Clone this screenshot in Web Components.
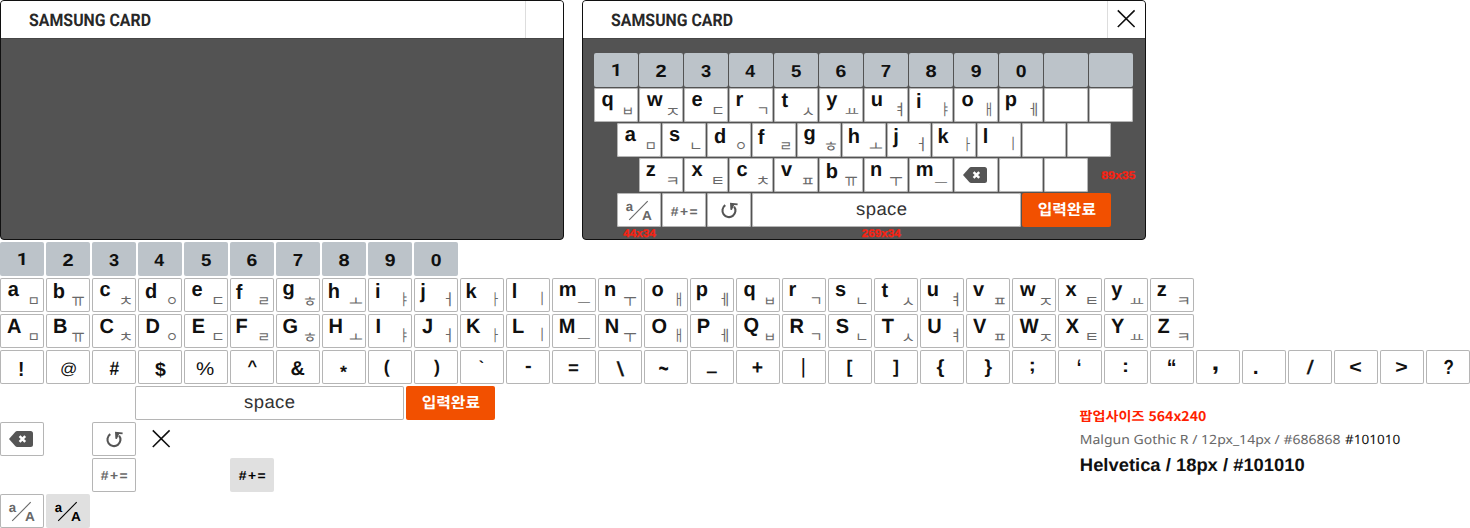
<!DOCTYPE html>
<html lang="ko">
<head>
<meta charset="utf-8">
<title>SAMSUNG CARD keypad</title>
<style>
html,body{margin:0;background:#fff;font-family:"Liberation Sans",Arial,sans-serif;color:#101010}
</style>
</head>
<body>
<keypad-board></keypad-board>
<script>
const FONTS={
  bold:['700','"Liberation Sans", sans-serif'],
  reg:['400','"Liberation Sans", sans-serif'],
  ko:['400','"Noto Sans CJK KR", sans-serif'],
  kob:['700','"Noto Sans CJK KR", sans-serif'],
  ui:['400','"Noto Sans", sans-serif'],
  title:['700','Roboto, sans-serif']
};
const ctx=document.createElement('canvas').getContext('2d');
const esc=s=>String(s).replace(/&/g,'&amp;').replace(/</g,'&lt;').replace(/>/g,'&gt;').replace(/"/g,'&quot;');

/* A line of text whose ink edges are set in px: x="left[,right]" and base="y" or y="top,bottom". */
class InkLabel extends HTMLElement{
  connectedCallback(){
    const root=this.shadowRoot||this.attachShadow({mode:'open'});
    const t=this.getAttribute('text'), size=+this.getAttribute('size'), ls=+(this.getAttribute('spacing')||0);
    const face=this.getAttribute('face')||'bold', [w,fam]=FONTS[face];
    /* strokes of the jamo thinner than this keep their own weight */
    const thin=face==='ko'?2.5:0;
    ctx.letterSpacing='0px';
    ctx.font=`${w} ${size}px ${fam}`;
    const line=ctx.measureText(t);
    const A=Math.round(line.fontBoundingBoxAscent), D=Math.round(line.fontBoundingBoxDescent), L=A+D;
    /* ink is measured at 20 times the size, where it is not rounded to whole pixels */
    ctx.font=`${w} ${size*20}px ${fam}`;
    const m=ctx.measureText(t);
    const left=m.actualBoundingBoxLeft/20, up=m.actualBoundingBoxAscent/20;
    const inkW=m.actualBoundingBoxRight/20+left+ls*([...t].length-1), inkH=up+m.actualBoundingBoxDescent/20;
    const xs=this.getAttribute('x').split(',').map(Number);
    let sx=1,sy=1,tx,ty;
    if(xs.length>1&&inkW>thin) sx=(xs[1]-xs[0])/inkW;
    tx=xs[0]+left*sx;
    if(xs.length>1&&inkW<=thin) tx=(xs[0]+xs[1])/2-(inkW/2-left);
    if(this.hasAttribute('y')){
      const ys=this.getAttribute('y').split(',').map(Number);
      if(inkH>thin) sy=(ys[1]-ys[0])/inkH;
      ty=(ys[0]+ys[1])/2+.35+(+this.getAttribute('drop')||0)-(A-up+inkH/2)*sy;
    }else{
      sy=+(this.getAttribute('stretch')||1);
      ty=+this.getAttribute('base')-A*sy;
    }
    root.innerHTML=`<style>:host{display:block;grid-area:1/1;min-width:0;height:100%}
      span{display:block;width:max-content;white-space:pre;font:${w} ${size}px/${L}px ${fam};letter-spacing:${ls}px;text-rendering:geometricPrecision;
      transform-origin:0 0;transform:translate(${tx}px,${ty}px) scale(${sx},${sy})}</style><span>${esc(t)}</span>`;
  }
}
customElements.define('ink-label',InkLabel);

class KeyIcon extends HTMLElement{
  connectedCallback(){
    const art={
      back:'<path d="M9 17l6.2-7.1Q16 9 17.2 9H30.500q2.500 0 2.500 2.500v11q0 2.500-2.500 2.500H17.200q-1.200 0-2-.9z" fill="#555"/><path d="M19.600 14.200l5.600 5.600m0-5.600l-5.600 5.600" stroke="#fff" stroke-width="2.500"/>',
      redo:'<path d="M18.300 12.200A6.500 6.500 0 1 0 27.100 13.600" fill="none" stroke="#555" stroke-width="2.100"/><path d="M23 9.800l7.700.7-.2 1.700-3.300-.2-2.300 5-1.500-.3z" fill="#555"/>',
      slash:'<path d="M12.200 26.900L30.700 8.200" stroke="currentColor" stroke-width="1.100"/>',
      close:'<path d="M14.800 8.400L31.600 25m0-16.600L14.800 25" stroke="#101010" stroke-width="1.600"/>'
    }[this.getAttribute('name')];
    this.attachShadow({mode:'open'}).innerHTML=`<style>:host{display:block;grid-area:1/1}svg{display:block}</style><svg width="44" height="34" viewBox="0 0 44 34">${art}</svg>`;
  }
}
customElements.define('key-icon',KeyIcon);

class KeyCap extends HTMLElement{
  connectedCallback(){
    this.attachShadow({mode:'open'}).innerHTML=`<style>
    :host{display:grid;grid-template:34px/100%;width:44px;height:34px;flex:none;box-sizing:border-box;border-radius:2px;background:#fff;box-shadow:inset 0 0 0 1px #b5b5b5;color:#101010}
    :host([kind=num]){background:#bcc3c9;box-shadow:none}
    :host([kind=space]){width:269px;color:#333}
    :host([kind=done]){width:89px;background:#f25000;box-shadow:none;color:#fff}
    :host([kind=fn]){color:#686868}
    :host([kind=on]){background:#e0e0e0;box-shadow:none;color:#000}
    :host([kind=none]){background:none;box-shadow:none}
    </style><slot></slot>`;
  }
}
customElements.define('key-cap',KeyCap);

class KeyRow extends HTMLElement{
  connectedCallback(){
    this.attachShadow({mode:'open'}).innerHTML=`<style>:host{display:flex;height:34px;gap:var(--key-gap,2px)}</style><slot></slot>`;
  }
}
customElements.define('key-row',KeyRow);

class CardPopup extends HTMLElement{
  connectedCallback(){
    this.attachShadow({mode:'open'}).innerHTML=`<style>
    :host{display:flex;flex-direction:column;box-sizing:border-box;width:564px;height:240px;border:1px solid #101010;border-radius:4px;background:#535353;overflow:hidden;position:relative;--key-gap:1px}
    header{display:grid;grid-template-columns:524px 1fr;height:37px;background:#fff;color:#282828}
    .x{border-left:1px solid #ddd;display:grid;overflow:hidden}
    ::slotted(key-icon){margin-left:-5px;margin-top:1px}
    main{flex:1;border-top:1px solid #464646;padding:14px 0 0 11px;display:flex;flex-direction:column;gap:1px}
    </style><header><ink-label text="SAMSUNG CARD" face="title" size="17" x="28.600,149.300" y="13,26"></ink-label><div class="x"><slot name="close"></slot></div></header><main><slot></slot></main><slot name="note"></slot>`;
  }
}
customElements.define('card-popup',CardPopup);

/* letter: [jamo, ink left, baseline, capital ink left, jamo ink x0,x1, jamo ink y0,y1] */
const K={
a:['ㅁ',8,18,7.3,'30,37.7','20.300,27'],b:['ㅠ',8,20,8.3,'26.300,38','20.300,29.500'],c:['ㅊ',8,18,8,'29,39','19.300,27.700'],
d:['ㅇ',7.7,20,8.7,'30,37.700','20,27.300'],e:['ㄷ',8,18,9,'29.700,38.300','20.300,27.300'],f:['ㄹ',6,21,6.7,'29.700,38','20.300,27.300'],
g:['ㅎ',7,17,7,'29,39','19.300,28.300'],h:['ㅗ',7,20,7.7,'27.700,40','20.700,26.700'],i:['ㅑ',8.2,20,8.7,'35.300,38.700','15,29'],
j:['ㅓ',6,20,8,'32,36.700','15,29'],k:['ㅏ',6.7,20,7.3,'34.700,38','15,29'],l:['ㅣ',7,20,7.3,'35.300,36.700','15,28.500'],
m:['ㅡ',8,18,8,'26,38','24.300,25.700'],n:['ㅜ',7.3,18,8,'26,38','20.300,29.300'],o:['ㅐ',8,18,8,'33,37','15,28.700'],
p:['ㅔ',7,18,8,'31.300,37.700','15,28.700'],q:['ㅂ',8,18,8,'30,37.700','20.300,27'],r:['ㄱ',7.8,18,8.7,'29.700,38','20.500,27.300'],
s:['ㄴ',7.6,18,8,'29.700,38.300','20.500,27'],t:['ㅅ',7.6,19,7.7,'29.300,39','20,27.700'],u:['ㅕ',7.7,18,8.3,'33.300,38','15,28.700'],
v:['ㅍ',7,18,7,'29,38.700','20.500,27'],w:['ㅈ',7.7,18,7.7,'28.700,39','20.500,27.700'],x:['ㅌ',7.6,18,7.7,'29.300,38.300','20.300,27.300'],
y:['ㅛ',7.3,18,7.3,'26.700,39.300','20.700,26.700'],z:['ㅋ',7.3,18,7.7,'29,38.300','20.300,27.300']};
const SYM=[['!','19.7,22.7','11.7,26'],['@','15.3,30','12,26','reg'],['#','17.7,27','12,25.3'],['$','17,27.7','11.3,27.3'],['%','12.7,29.7','12,25.3','reg'],
['^','17.7,26.7','10.7,17.7'],['&','15,28.3','11.7,26'],['*','18,25','16,23'],['(','16.7,22','9.7,27.3'],[')','20,25.3','9.7,27.3'],['`','19.3,23.3','10.3,13'],
['-','19.7,25','16.3,19'],['=','16.7,26.3','14,21.3'],['\\','18.7,26','11.3,26.3','reg'],['~','15,24','16.3,20.7'],['_','16.7,27','23,25'],['+','16.3,26.3','12.7,23'],
['|','20.3,22.3','8,28'],['[','19.3,24.3','9.7,27'],[']','19,24','9.7,27'],['{','16.7,24','9.3,27.3'],['}','18.7,25.7','9.3,27.3'],[';','18.7,22','11.7,24'],
['‘','19.7,22.3','9.7,16.7'],[':','20,23.3','13,22.7'],['“','18,25.3','9.7,16.7'],[',','17.3,21.7','16.7,24.3'],['.','12,15.3','20.7,24'],
['/','18.7,25.7','9.7,24.3','reg'],['<','16,27','12,22.3'],['>','16,27','12,22.3'],['?','18,27','9.7,24']];
const NUMX={1:'18.3,24.7',2:'17,27',3:'17.3,26.7',4:'16.3,26.3',5:'17.2,26.8',6:'17,26.7',7:'17.3,26.3',8:'17,27',9:'17.3,27',0:'17.3,26.7'};
const lab=(t,size,face,x,y,more='')=>`<ink-label text="${esc(t)}" size="${size}" face="${face}" x="${x}" ${y} ${more}></ink-label>`;
const cap=(kind,inner='')=>`<key-cap kind="${kind}">${inner}</key-cap>`;
const num=(n,y)=>cap('num',lab(n,18,n==='1'?'title':'bold',NUMX[n],`y="${y}"`));
const jamo=k=>`<ink-label style="color:#686868" text="${k[0]}" size="12" face="ko" x="${k[4]}" y="${k[5]}"></ink-label>`;
const low=c=>cap('key',lab(c,20,'bold',K[c][1],`base="${K[c][2]+.8}"`,'stretch="1.03"')+jamo(K[c]));
const up=c=>cap('key',lab(c.toUpperCase(),20,'bold',K[c][3],`base="${c==='q'?18.7:19.6}"`,'stretch="1.03"')+jamo(K[c]));
const row=(inner,style='')=>`<key-row style="${style}">${inner}</key-row>`;
const empty=cap('key').repeat(2), hole=cap('none');
const lows=s=>[...s].map(low).join('');
const nums=y=>[...'1234567890'].map(n=>num(n,y)).join('');
const space=(x,b)=>cap('space',lab('space',18,'reg',`${x},${x+50}`,`base="${b}"`,'spacing="0.4"'));
const done=cap('done',lab('입력완료',15,'kob','16.4,73.6','y="9.700,24.100"'));
const back=cap('fn','<key-icon name="back"></key-icon>'), redo=cap('fn','<key-icon name="redo"></key-icon>');
const hash=(k,y)=>cap(k,lab('#+=',13,'bold','9,35.2',`y="${y}"`,'spacing="1.4"'));
const aa=k=>cap(k,lab('a',13,'bold','9,16.2','y="9.900,17.400"')+'<key-icon name="slash"></key-icon>'+lab('A',13,'bold','25.3,34.7','y="17.900,27.100"'));
const letters='abcdefghijklmnopqrstuvwxyz';

class SpecNotes extends HTMLElement{
  connectedCallback(){
    this.attachShadow({mode:'open'}).innerHTML=`<style>
    :host{display:grid;grid-template-rows:24px 26px 26px;width:340px}
    div{display:grid}.r{color:#ff1e00}.g{color:#686868}.k{color:#101010}
    </style>
    <div class="r">${lab('팝업사이즈 564x240',13,'kob','0,125','y="3.400,15.800"')}</div>
    <div>${lab('Malgun Gothic R / 12px_14px / #686868',13,'ui','1,260','y="4.400,17.300"','class="g"')}${lab('#101010',13,'ui','265.3,319.7','y="4.600,14.300"','class="k"')}</div>
    <div>${lab('Helvetica / 18px / #101010',18,'bold','1,224','base="15"')}</div>`;
  }
}
customElements.define('spec-notes',SpecNotes);

class KeypadBoard extends HTMLElement{
  connectedCallback(){
    this.attachShadow({mode:'open'}).innerHTML=`<style>
    :host{display:block;width:1470px;height:528px;overflow:hidden}
    .pops{display:flex;gap:18px;height:240px;margin-bottom:2px}
    .sheet{display:grid;gap:2px}
    .foot{display:flex;justify-content:space-between}
    .parts{display:grid;gap:2px}
    spec-notes{margin:20px 50px 0 0}
    .tag{position:absolute;color:#f82212;display:grid;width:50px;height:12px;-webkit-text-stroke:.3px #f82212}
    </style>
    <div class="pops"><card-popup></card-popup>
    <card-popup><key-icon slot="close" name="close"></key-icon>
    ${row(nums('11.3,23.7')+cap('num').repeat(2))}
    ${row(lows('qwertyuiop')+empty)}
    ${row(lows('asdfghjkl')+empty,'margin-left:23px')}
    ${row(lows('zxcvbnm')+back+empty,'margin-left:45px')}
    ${row(aa('fn')+hash('fn','14,23')+redo+space(104.3,22)+done,'margin-left:23px')}
    <div slot="note" class="tag" style="left:40px;top:228px">${lab('44x34',11,'bold','0.3,32.7','y="1.200,9.200"')}</div>
    <div slot="note" class="tag" style="left:279px;top:228px">${lab('269x34',11,'bold','0,38.800','y="1.200,9.200"')}</div>
    <div slot="note" class="tag" style="left:518px;top:170px">${lab('89x35',11,'bold','0.600,34','y="1,9"')}</div>
    </card-popup></div>
    <div class="sheet">
    ${row(nums('11.6,23.900'))}
    ${row([...letters].map(low).join(''))}
    ${row([...letters].map(up).join(''))}
    ${row(SYM.map(s=>cap('key',lab(s[0],19,s[3]||'bold',s[1],`y="${s[2]}" drop=".4"`,/[\\/]/.test(s[0])?'style="-webkit-text-stroke:.3px"':''))).join(''))}
    <div class="foot"><div class="parts">
    ${row(space(109.3,22)+done,'margin-left:135px')}
    ${row(back+hole+redo+cap('none','<key-icon name="close"></key-icon>'))}
    ${row(hole+hole+hash('fn','13,22')+hole+hole+hash('on','13,22'))}
    ${row(aa('fn')+aa('on'))}
    </div><spec-notes></spec-notes></div>
    </div>`;
  }
}
customElements.define('keypad-board',KeypadBoard);
</script>
</body>
</html>
